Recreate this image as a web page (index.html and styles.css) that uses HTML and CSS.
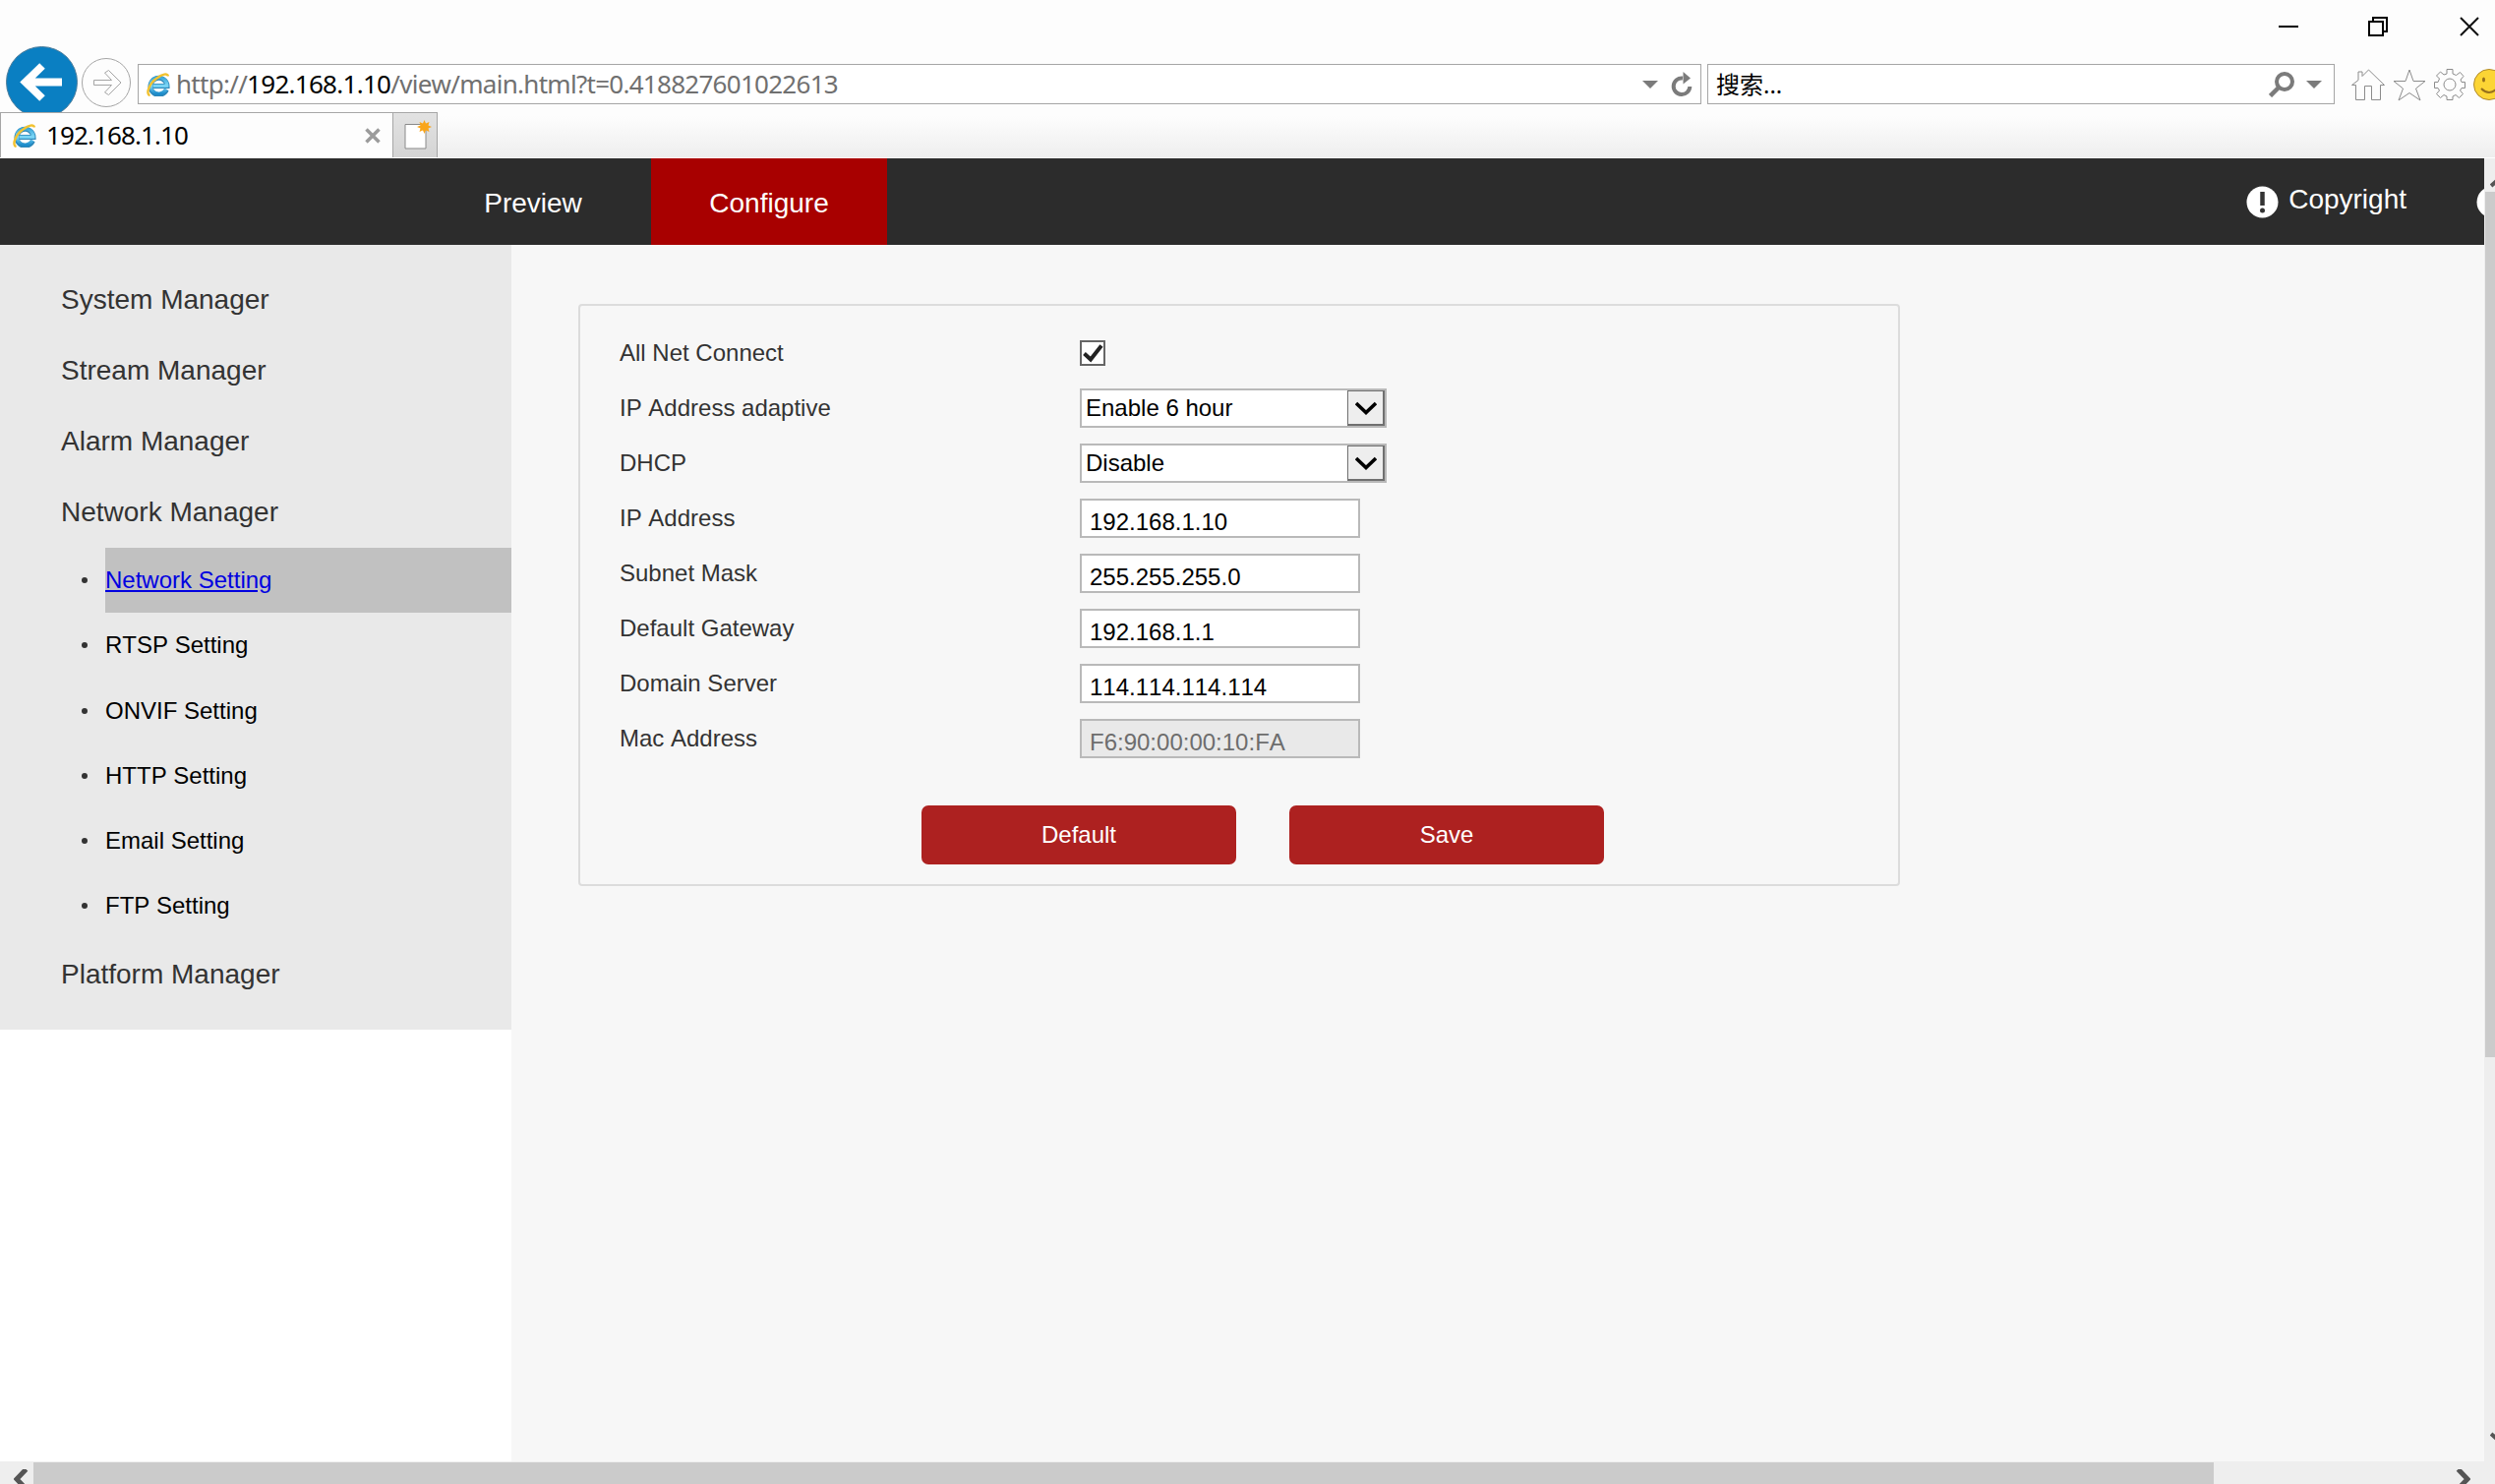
FILE: index.html
```
<!DOCTYPE html>
<html lang="en">
<head>
    <meta charset="UTF-8">
    <meta name="viewport" content="width=device-width, initial-scale=1.0">
    <title>192.168.1.10</title>
    <link rel="stylesheet" href="styles.css">
</head>
<body>
    <svg class="defs">
        <defs>
            <linearGradient id="ieBlue" x1="0" y1="0" x2="0" y2="1">
                <stop offset="0" stop-color="#3aa6d8"/>
                <stop offset=".5" stop-color="#7fd8f7"/>
                <stop offset="1" stop-color="#1c8ccb"/>
            </linearGradient>
            <symbol id="ie" viewBox="0 0 24 24">
                <path d="M20.300 17.200A8.500 8.500 0 1 1 21 13.500H6.500" fill="none" stroke="#2c86b8" stroke-width="5"/>
                <path d="M20 16.600A8.300 8.300 0 1 1 20.800 13.400H6.500" fill="none" stroke="url(#ieBlue)" stroke-width="3.400"/>
                <path d="M3.600 23C-1.500 22 3 10.500 10.500 5.500 16 1.500 21.500 0 22 3.500" fill="none" stroke="#f2c230" stroke-width="2.400"/>
            </symbol>
            <symbol id="arrow" viewBox="0 0 16 8">
                <path d="M0 0h16L8 8z" fill="#7b7b7b"/>
            </symbol>
            <symbol id="check-down" viewBox="0 0 22 14">
                <path d="M1 2l10 9.500L21 2" fill="none" stroke="#000" stroke-width="3.600"/>
            </symbol>
        </defs>
    </svg>

    <div class="browser">
        <div class="titlebar">
            <svg width="20" height="20"><path d="M0 10h20" stroke="#000" stroke-width="2"/></svg>
            <svg width="20" height="20"><path d="M1 5h14v14H1zM5 5V1h14v14h-4" fill="none" stroke="#000" stroke-width="2"/></svg>
            <svg width="20" height="20"><path d="M1 1l18 18M19 1L1 19" stroke="#111" stroke-width="2"/></svg>
        </div>
        <div class="toolbar">
            <div class="back">
                <svg width="73" height="73" viewBox="0 0 73 73">
                    <circle cx="36.500" cy="36.500" r="36" fill="#0a7fc2" stroke="#4d7d9b"/>
                    <path d="M57 36.500H21M37 20L20 36.500 37 53" fill="none" stroke="#fff" stroke-width="8"/>
                </svg>
            </div>
            <svg class="forward" width="50" height="50" viewBox="0 0 50 50" fill="none" stroke="#a5a5a5">
                <circle cx="25" cy="25" r="24.500"/>
                <path d="M12.500 22.500h18L23.500 15l4-2.500L40 25 27.500 37.500l-4-2.500 7-7.500h-18z"/>
            </svg>
            <div class="address">
                <svg class="favicon" width="24" height="24"><use href="#ie"/></svg>
                <span class="url">http://<b>192.168.1.10</b>/view/main.html?t=0.418827601022613</span>
                <svg class="down" width="16" height="8"><use href="#arrow"/></svg>
                <svg width="22" height="26" viewBox="0 0 22 26">
                    <path d="M12 6.500A8.300 8.300 0 1 0 19.300 15" fill="none" stroke="#7b7b7b" stroke-width="4"/>
                    <path d="M12.500 0v12.500L20 6.500z" fill="#7b7b7b"/>
                </svg>
            </div>
            <div class="search">
                <span>搜索...</span>
                <svg class="glass" width="26" height="26" viewBox="0 0 26 26" fill="none" stroke="#7b7b7b">
                    <circle cx="16" cy="10" r="8" stroke-width="4"/>
                    <path d="M10 16l-8.500 8.500" stroke-width="4.500"/>
                </svg>
                <svg width="16" height="8"><use href="#arrow"/></svg>
            </div>
            <div class="tools">
                <svg width="34" height="33" viewBox="0 0 34 33" fill="none" stroke="#8c8c8c">
                    <path d="M4.500 16.500v15h9v-14h7v14h9v-15h4L17.500 1 11 7.500V3H7v8.500l-6.500 5z"/>
                </svg>
                <svg width="34" height="33" viewBox="0 0 34 33" fill="none" stroke="#8c8c8c">
                    <path d="M17 1l4 11.500h12L23.500 20 28 32l-11-7.500L6 32l4.500-12L1 12.500h12z"/>
                </svg>
                <svg width="32" height="32" viewBox="0 0 32 32" fill="none" stroke="#8c8c8c">
                    <path d="M13 .500h6V5l3.500 1.500 4-3 3.500 4-3 3.500 1 2.500h3.500v6H28L26.500 22l3 3.500-4 4-3.500-3-3 1.500v3.500h-6V28l-3-1.500-3.500 3-4-4 3-3.500L4 19.500H.500v-6H4L5.500 10l-3-3 4-4L10 6l3-1z"/>
                    <circle cx="16" cy="16" r="6"/>
                </svg>
                <svg width="32" height="32" viewBox="0 0 32 32">
                    <circle cx="16" cy="16" r="15.500" fill="#fcd535" stroke="#b08a2c"/>
                    <ellipse cx="10.500" cy="11" rx="1.500" ry="2.500" fill="#96701c"/>
                    <path d="M8 20q8 8 16 0" fill="none" stroke="#96701c" stroke-width="2"/>
                </svg>
            </div>
        </div>
        <div class="tabs">
            <div class="tab">
                <svg class="favicon" width="24" height="24"><use href="#ie"/></svg>
                <span>192.168.1.10</span>
                <svg class="close" width="16" height="16"><path d="M1.500 1.500l13 13M14.500 1.500l-13 13" stroke="#9b9b9b" stroke-width="3.500"/></svg>
            </div>
            <div class="newtab">
                <svg width="28" height="30" viewBox="0 0 28 30">
                    <path d="M1 4.500h21V29H1z" fill="#fff" stroke="#8a8a8a"/>
                    <path d="M20.500 0l1.500 3.500 3.500-1.500-1 3.500L28 7l-3.500 1.500 1 3.500-3.500-1.500L20.500 14 19 10.500 15.500 12l1-3.500L13 7l3.500-1.500-1-3.500L19 3.500z" fill="#f9a51b"/>
                </svg>
            </div>
        </div>
    </div>

    <div class="view">
        <div class="page">
            <div class="header">
                <div class="nav">
                    <a>Preview</a>
                    <a class="active">Configure</a>
                </div>
                <div class="links">
                    <svg width="33" height="33" viewBox="0 0 33 33">
                        <circle cx="16.500" cy="16.500" r="16" fill="#fff"/>
                        <path d="M16.500 6v14" stroke="#333" stroke-width="4.500"/>
                        <circle cx="16.500" cy="25" r="2.500" fill="#333"/>
                    </svg>
                    <span>Copyright</span>
                    <svg width="33" height="33"><circle cx="16.500" cy="16.500" r="16" fill="#fff"/></svg>
                </div>
            </div>
            <div class="main">
                <div class="sidebar">
                    <h3>System Manager</h3>
                    <h3>Stream Manager</h3>
                    <h3>Alarm Manager</h3>
                    <h3>Network Manager</h3>
                    <ul>
                        <li class="on"><a>Network Setting</a></li>
                        <li><a>RTSP Setting</a></li>
                        <li><a>ONVIF Setting</a></li>
                        <li><a>HTTP Setting</a></li>
                        <li><a>Email Setting</a></li>
                        <li><a>FTP Setting</a></li>
                    </ul>
                    <h3>Platform Manager</h3>
                </div>
                <div class="content">
                    <div class="panel">
                        <div class="row">
                            <label>All Net Connect</label>
                            <div class="checkbox">
                                <svg width="22" height="22" viewBox="0 0 22 22"><path d="M2.500 11.500l6.500 6L20 3.500" fill="none" stroke="#222" stroke-width="4"/></svg>
                            </div>
                        </div>
                        <div class="row">
                            <label>IP Address adaptive</label>
                            <div class="select">
                                <span>Enable 6 hour</span>
                                <i><svg width="22" height="14"><use href="#check-down"/></svg></i>
                            </div>
                        </div>
                        <div class="row">
                            <label>DHCP</label>
                            <div class="select">
                                <span>Disable</span>
                                <i><svg width="22" height="14"><use href="#check-down"/></svg></i>
                            </div>
                        </div>
                        <div class="row">
                            <label>IP Address</label>
                            <input type="text" value="192.168.1.10">
                        </div>
                        <div class="row">
                            <label>Subnet Mask</label>
                            <input type="text" value="255.255.255.0">
                        </div>
                        <div class="row">
                            <label>Default Gateway</label>
                            <input type="text" value="192.168.1.1">
                        </div>
                        <div class="row">
                            <label>Domain Server</label>
                            <input type="text" value="114.114.114.114">
                        </div>
                        <div class="row">
                            <label>Mac Address</label>
                            <input type="text" value="F6:90:00:00:10:FA" disabled>
                        </div>
                        <div class="buttons">
                            <button>Default</button>
                            <button>Save</button>
                        </div>
                    </div>
                </div>
            </div>
        </div>
        <div class="vscroll">
            <svg width="18" height="11" viewBox="0 0 18 11"><path d="M1 9l8-7 8 7" fill="none" stroke="#555" stroke-width="4"/></svg>
            <div class="thumb"></div>
            <svg class="end" width="18" height="11" viewBox="0 0 18 11"><path d="M1 2l8 7 8-7" fill="none" stroke="#555" stroke-width="4"/></svg>
        </div>
    </div>
    <div class="hscroll">
        <svg width="15" height="20" viewBox="0 0 15 20"><path d="M12.500 0L3 10l9.500 10" fill="none" stroke="#555" stroke-width="5"/></svg>
        <div class="thumb"></div>
        <svg class="end" width="15" height="20" viewBox="0 0 15 20"><path d="M2.500 0L12 10 2.500 20" fill="none" stroke="#555" stroke-width="5"/></svg>
    </div>
</body>
</html>
```
FILE: styles.css
```
*{
    padding: 0;
    margin: 0;
    box-sizing: border-box;
}
body{
    display: flex;
    flex-direction: column;
    height: 1509px;
    overflow: hidden;
    background: #fff;
    font-family: "Liberation Sans", Arial, sans-serif;
    font-size: 24px;
    font-kerning: none;
    color: #333;
}
svg{
    display: block;
    flex-shrink: 0;
}
.defs{
    position: absolute;
    width: 0;
    height: 0;
}

/* browser */
.browser{
    height: 161px;
    flex-shrink: 0;
    background: linear-gradient(#fdfdfd 0, #fdfdfd 118px, #eee 160px, #fff 160px);
    font-family: "Noto Sans", "Noto Sans CJK SC", sans-serif;
    font-size: 26px;
    color: #000;
}
.titlebar{
    display: flex;
    justify-content: flex-end;
    gap: 72px;
    height: 54px;
    padding: 17px 16px 0 0;
}
.titlebar svg:nth-child(2){
    margin-right: 1px;
}
.titlebar svg:first-child{
    margin-right: -1px;
}
.toolbar{
    display: flex;
    align-items: flex-start;
    height: 60px;
    padding-left: 6px;
}
.back{
    height: 67px;
    width: 73px;
    margin-top: -7px;
    overflow: hidden;
}
.forward{
    margin: 5px 7px 0 4px;
}
.address,
.search{
    display: flex;
    align-items: center;
    height: 41px;
    margin-top: 11px;
    border: 1px solid #a6a6a6;
    background: #fff;
    white-space: nowrap;
}
.address{
    width: 1590px;
    padding: 0 8px 0 8px;
}
.url{
    margin-left: 6px;
    flex: 1;
    color: #707070;
    line-height: 38px;
    padding-bottom: 1px;
    letter-spacing: -0.720px;
}
.url b{
    font-weight: normal;
    color: #000;
}
.down{
    margin-right: 13px;
}
.search{
    width: 638px;
    margin-left: 6px;
    padding: 0 12px 0 8px;
    font-size: 24px;
}
.search span{
    flex: 1;
    padding-bottom: 2px;
}
.glass{
    margin-right: 12px;
}
.tools{
    display: flex;
    gap: 8px;
    margin: 16px -20px 0 17px;
}
.tabs{
    display: flex;
    height: 46px;
}
.tab{
    display: flex;
    align-items: center;
    width: 400px;
    padding: 0 12px;
    border: 1px solid #a6a6a6;
    border-bottom: 0;
    background: #fdfdfd;
}
.tab span{
    flex: 1;
    margin-left: 10px;
    padding-bottom: 1px;
    letter-spacing: -0.900px;
}
.newtab{
    width: 45px;
    padding: 7px 0 0 11px;
    border: 1px solid #a6a6a6;
    border-width: 1px 1px 0 0;
    background: linear-gradient(#e2e2e2, #d4d4d4);
}

/* page */
.view{
    display: flex;
    height: 1325px;
}
.page{
    width: 2526px;
    overflow: hidden;
}
.header{
    display: flex;
    justify-content: space-between;
    height: 88px;
    background: #2c2c2c;
    color: #fff;
    font-size: 28px;
    line-height: 90px;
}
.nav{
    display: flex;
    padding-left: 422px;
    line-height: 92px;
}
.nav a{
    width: 240px;
    height: 88px;
    text-align: center;
}
.nav .active{
    background: #a80000;
}
.links{
    display: flex;
    align-items: center;
    margin-right: -25px;
}
.links span{
    margin: -4px 71px 0 10px;
}
.main{
    display: flex;
    align-items: flex-start;
    height: 1237px;
}
.sidebar{
    width: 520px;
    height: 798px;
    padding: 20px 0;
    background: #e9e9e9;
}
.sidebar h3{
    height: 72px;
    padding-left: 62px;
    font-size: 28px;
    font-weight: normal;
    line-height: 71px;
}
.sidebar ul{
    height: 398px;
    padding-left: 107px;
    list-style: none;
}
.sidebar li{
    position: relative;
    height: 66.300px;
    line-height: 66px;
    color: #000;
}
.sidebar li::before{
    content: "";
    position: absolute;
    left: -24px;
    top: 30px;
    width: 6px;
    height: 6px;
    border-radius: 50%;
    background: #333;
}
.sidebar .on{
    background: #c1c1c1;
    color: #0000e0;
    text-decoration: underline;
}
.content{
    flex: 1;
    height: 1237px;
    padding: 60px 0 0 68px;
    background: #f7f7f7;
}
.panel{
    width: 1344px;
    height: 592px;
    padding: 20px 40px 0;
    border: 2px solid #dcdcdc;
    border-radius: 4px;
}
.row{
    display: flex;
    align-items: center;
    height: 56px;
}
.row label{
    width: 468px;
}
.checkbox{
    width: 26px;
    height: 26px;
    border: 2px solid #666;
    background: #fff;
}
.select{
    display: flex;
    align-items: center;
    width: 312px;
    height: 40px;
    padding-left: 4px;
    border: 2px solid #b9b9b9;
    background: #fff;
    color: #000;
}
.select span{
    flex: 1;
}
.select i{
    display: flex;
    align-items: center;
    justify-content: center;
    width: 38px;
    height: 36px;
    border: 2px solid #707070;
    border-width: 1px 2px 2px 1px;
    background: #eee;
}
.row input{
    width: 285px;
    height: 40px;
    padding: 8px 0 0 8px;
    border: 2px solid #b9b9b9;
    background: #fff;
    color: #000;
    font: 24px "Liberation Sans", Arial, sans-serif;
    font-kerning: none;
}
.row input:disabled{
    background: #e9e9e9;
    color: #6d6d6d;
}
.buttons{
    display: flex;
    gap: 54px;
    padding: 40px 0 0 307px;
}
.buttons button{
    width: 320px;
    height: 60px;
    border: 0;
    border-radius: 7px;
    background: #ad2120;
    color: #fff;
    font: 24px "Liberation Sans", Arial, sans-serif;
}

/* scrollbars */
.vscroll{
    display: flex;
    flex-direction: column;
    width: 11px;
    padding: 19px 0 19px 1px;
    overflow: hidden;
    background: #eee;
}
.vscroll svg{
    margin-left: 5px;
}
.vscroll .thumb{
    height: 880px;
    margin-top: 4px;
    background: #cbcbcb;
}
.vscroll .end{
    margin-top: auto;
}
.hscroll{
    display: flex;
    height: 23px;
    overflow: hidden;
    background: #eee;
}
.hscroll svg{
    margin: 8px 0 0 14px;
}
.hscroll .thumb{
    width: 2217px;
    margin: 1px 0 0 5px;
    background: #cbcbcb;
}
.hscroll .end{
    margin: 8px 25px 0 auto;
}
```
